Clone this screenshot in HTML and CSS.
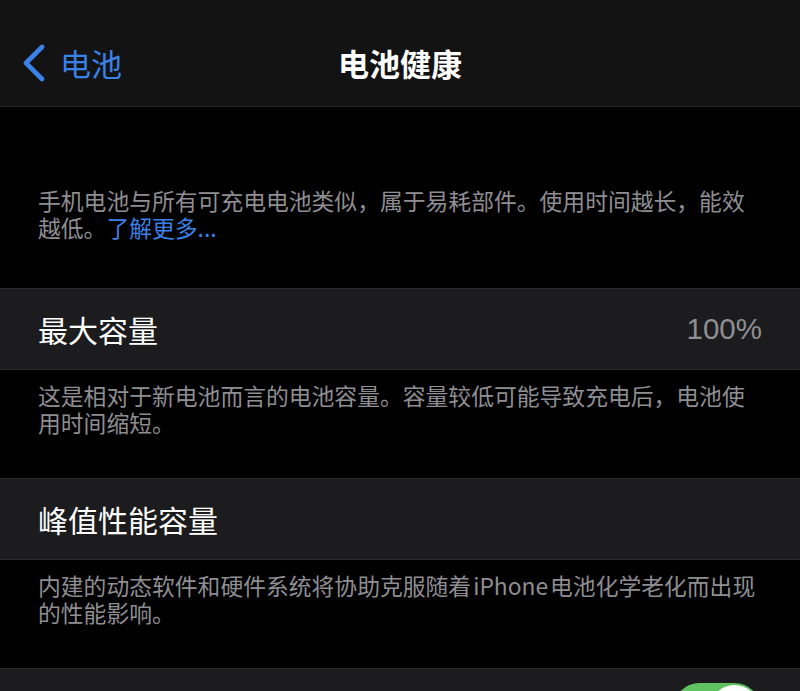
FILE: index.html
```html
<!DOCTYPE html>
<html lang="zh-CN">
<head>
<meta charset="utf-8">
<title>电池健康</title>
<link rel="stylesheet" href="styles.css">
</head>
<body>
<div class="screen">
  <header class="nav">
    <div class="nav-left">
      <svg class="chevron" width="24" height="38" viewBox="0 0 24 38">
        <polyline points="20,3 4,19 20,35" fill="none" stroke="#3a82e8" stroke-width="4.6" stroke-linecap="round" stroke-linejoin="round"/>
      </svg>
      <span class="back-text">电池</span>
    </div>
    <div class="nav-title">电池健康</div>
    <div class="nav-right"></div>
  </header>

  <section class="desc desc-first">
    <p>手机电池与所有可充电电池类似，属于易耗部件。使用时间越长，能效越低。<span class="link">了解更多...</span></p>
  </section>

  <div class="row">
    <span class="label">最大容量</span>
    <span class="value">100%</span>
  </div>

  <section class="desc">
    <p>这是相对于新电池而言的电池容量。容量较低可能导致充电后，电池使用时间缩短。</p>
  </section>

  <div class="row">
    <span class="label">峰值性能容量</span>
  </div>

  <section class="desc">
    <p>内建的动态软件和硬件系统将协助克服随着<span class="latin">iPhone</span>电池化学老化而出现的性能影响。</p>
  </section>

  <div class="row row-end">
    <span class="toggle"><span class="knob"></span></span>
  </div>
</div>
</body>
</html>
```

FILE: styles.css
```css
html, body {
  margin: 0;
  padding: 0;
  background: #000;
}

body {
  width: 800px;
  height: 691px;
  overflow: hidden;
  font-family: "Noto Sans CJK SC", "Noto Sans", sans-serif;
  color: #fff;
}

.screen {
  display: flex;
  flex-direction: column;
}

.nav {
  box-sizing: border-box;
  height: 107px;
  padding-top: 20px;
  background: #131313;
  border-bottom: 1px solid #262626;
  display: grid;
  grid-template-columns: 1fr auto 1fr;
  align-items: center;
}

.nav-left {
  display: flex;
  align-items: center;
  padding-left: 22px;
  gap: 14px;
  color: #3a82e8;
}

.chevron {
  display: block;
}

.back-text {
  font-size: 31px;
  line-height: 40px;
}

.nav-title {
  font-size: 31px;
  font-weight: 700;
  line-height: 40px;
  color: #fff;
}

.desc {
  padding: 12px 42px 42px 38px;
}

.desc-first {
  padding-top: 80px;
  padding-bottom: 47px;
}

.desc p {
  margin: 0;
  font-size: 22.8px;
  line-height: 27px;
  color: #8e8e93;
}

.latin {
  margin: 0 2px;
}

.link {
  color: #3a82e8;
}

.row {
  box-sizing: border-box;
  height: 82px;
  background: #1c1c1e;
  border-top: 1px solid #2c2c2e;
  border-bottom: 1px solid #2c2c2e;
  display: flex;
  align-items: center;
  justify-content: space-between;
  padding: 0 38px;
}

.row-end {
  justify-content: flex-end;
}

.label {
  font-size: 30px;
  line-height: 40px;
  color: #fff;
}

.value {
  font-family: "Liberation Sans", Arial, sans-serif;
  font-size: 29.5px;
  color: #8e8e93;
}

.toggle {
  position: relative;
  width: 88px;
  height: 53px;
  border-radius: 27px;
  background: #5fc35f;
  margin-right: 1px;
}

.knob {
  position: absolute;
  top: 2px;
  right: 2px;
  width: 49px;
  height: 49px;
  border-radius: 50%;
  background: #fff;
  box-shadow: 0 2px 4px rgba(0, 0, 0, 0.25);
}
```
